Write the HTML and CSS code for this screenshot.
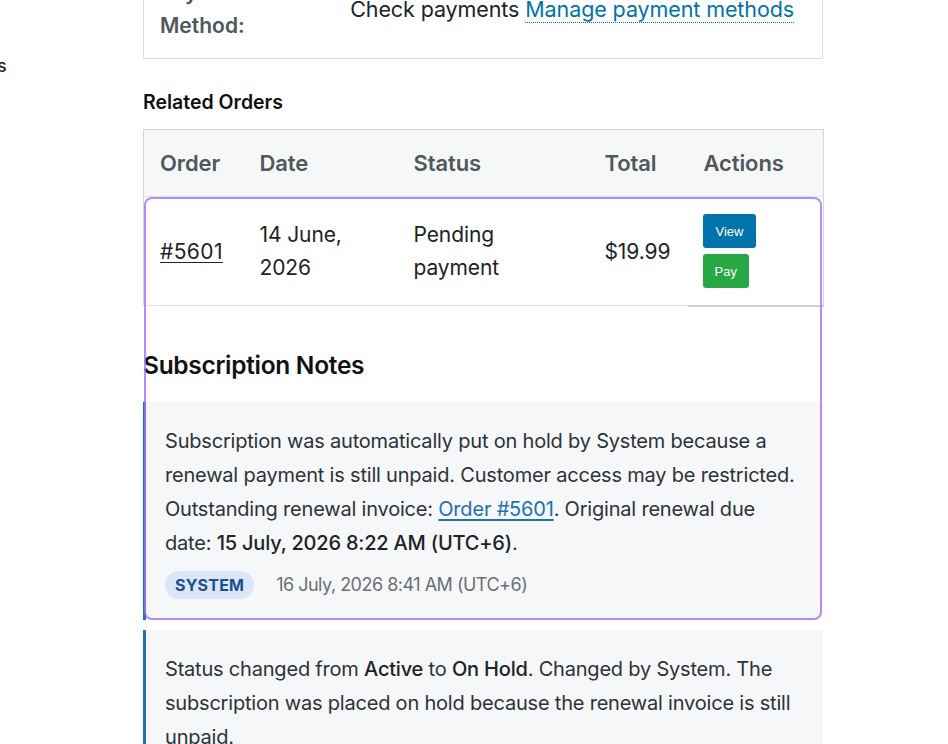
FILE: index.html
```html
<!DOCTYPE html>
<html lang="en">
<head>
<meta charset="utf-8">
<title>Subscription</title>
<link rel="stylesheet" href="styles.css">
</head>
<body>
<div class="page">
  <aside class="sidebar">
    <p class="side-item">Subscriptions</p>
  </aside>
  <main class="main">
    <div class="pay-box">
      <div class="pay-label">Payment<br>Method:</div>
      <div class="pay-value">Check payments <a class="pay-link" href="#">Manage payment methods</a></div>
    </div>

    <h3 class="section-title">Related Orders</h3>
    <table class="orders">
      <colgroup>
        <col class="c-order"><col class="c-date"><col class="c-status"><col class="c-total"><col class="c-actions">
      </colgroup>
      <thead>
        <tr><th>Order</th><th>Date</th><th>Status</th><th>Total</th><th>Actions</th></tr>
      </thead>
      <tbody>
        <tr>
          <td><a class="order-link" href="#">#5601</a></td>
          <td>14 June,<br>2026</td>
          <td>Pending<br>payment</td>
          <td>$19.99</td>
          <td class="actions">
            <a class="btn btn-view" href="#">View</a>
            <a class="btn btn-pay" href="#">Pay</a>
          </td>
        </tr>
      </tbody>
    </table>

    <h2 class="notes-title">Subscription Notes</h2>
    <div class="note">
      <p class="note-text">Subscription was automatically put on hold by System because a renewal payment is still unpaid. Customer access may be restricted. Outstanding renewal invoice: <a class="note-link" href="#">Order #5601</a>. Original renewal due date: <strong>15 July, 2026 8:22 AM (UTC+6)</strong>.</p>
      <div class="note-meta">
        <span class="badge">SYSTEM</span>
        <span class="note-date">16 July, 2026 8:41 AM (UTC+6)</span>
      </div>
    </div>
    <div class="note">
      <p class="note-text">Status changed from <strong>Active</strong> to <strong>On Hold</strong>. Changed by System. The subscription was placed on hold because the renewal invoice is still unpaid.</p>
    </div>

    <div class="highlight"></div>
  </main>
</div>
</body>
</html>
```
FILE: styles.css
```css
html, body {
  margin: 0;
  padding: 0;
  background: #ffffff;
}
body {
  font-family: "Inter", "Noto Sans", sans-serif;
  color: #1d2327;
  overflow: hidden;
}
.page {
  display: flex;
  align-items: flex-start;
}
.sidebar {
  width: 143px;
  flex: 0 0 143px;
  overflow: hidden;
}
.side-item {
  margin: 55px 0 0 -112px;
  font-size: 18px;
  font-weight: 500;
  color: #1d2327;
  white-space: nowrap;
}
.main {
  position: relative;
  width: 680px;
  flex: 0 0 680px;
}
.pay-box {
  margin-top: -41px;
  border: 1px solid #dcdcde;
  display: flex;
  align-items: center;
  justify-content: space-between;
  padding: 16px 28px 16px 16px;
}
.pay-label {
  font-size: 21px;
  font-weight: 600;
  line-height: 33px;
  color: #50575e;
  letter-spacing: 0;
}
.pay-value {
  font-size: 21.5px;
  line-height: 33px;
  color: #1d2327;
  letter-spacing: -0.1px;
}
.pay-link {
  color: #0073aa;
  text-decoration: none;
  border-bottom: 1px dotted #0073aa;
}
.section-title {
  margin: 31px 0 15px 0;
  font-size: 19.5px;
  font-weight: 600;
  line-height: 24px;
  color: #111;
  letter-spacing: 0;
}
.orders {
  width: 680px;
  border-collapse: collapse;
  table-layout: fixed;
  border: 1px solid #d5d5d7;
  border-bottom: none;
  font-size: 21px;
  letter-spacing: -0.1px;
}
.c-order { width: 100px; }
.c-date { width: 154px; }
.c-status { width: 191px; }
.c-total { width: 99px; }
.c-actions { width: 136px; }
.orders th {
  background: #f6f7f7;
  text-align: left;
  font-weight: 600;
  font-size: 22px;
  color: #50575e;
  height: 66px;
  padding: 0 16px;
  border-bottom: 1px solid #e2e2e4;
}
.orders td {
  padding: 21px 16px 21px 16px;
  line-height: 33px;
  vertical-align: middle;
  border-bottom: 1px solid #e2e2e4;
}
.orders td.actions {
  padding: 17px 15px 16px 15px;
  border-bottom: 2px solid #cfcfd1;
}
.order-link {
  color: #1d2327;
  text-decoration: underline;
  text-underline-offset: 3px;
  text-decoration-thickness: 1px;
  letter-spacing: 0.4px;
}
.btn {
  display: flex;
  align-items: center;
  justify-content: center;
  height: 34px;
  padding: 0 13px;
  width: fit-content;
  border-radius: 3px;
  color: #ffffff;
  text-decoration: none;
  font-family: "Liberation Sans", Arial, sans-serif;
  font-size: 13px;
  letter-spacing: 0;
  line-height: 1;
}
.btn-view {
  background: #0073aa;
  margin-bottom: 6px;
}
.btn-pay {
  background: #28a745;
  padding: 0 12px;
}
.notes-title {
  margin: 42px 0 21px 0;
  font-size: 24.5px;
  font-weight: 600;
  line-height: 32px;
  color: #111;
  letter-spacing: -0.3px;
}
.note {
  background: #f6f7f9;
  border-left: 3px solid #2271b1;
  padding: 22px 22px 21px 19px;
  margin-bottom: 10px;
}
.note-text {
  margin: 0;
  font-size: 20px;
  line-height: 34px;
  color: #2c3338;
  letter-spacing: -0.2px;
}
.note-text strong {
  font-weight: 500;
  color: #1d2327;
}
.note-link {
  color: #2271b1;
  text-decoration: underline;
  text-underline-offset: 3px;
}
.note-meta {
  display: flex;
  align-items: center;
  gap: 22px;
  margin-top: 11px;
}
.badge {
  display: inline-flex;
  align-items: center;
  height: 28px;
  padding: 0 10px;
  border-radius: 14px;
  background: #dbe7f8;
  color: #1e4f8f;
  font-size: 16px;
  font-weight: 700;
  letter-spacing: 0.2px;
}
.note-date {
  font-size: 18px;
  color: #6b6f75;
  letter-spacing: -0.5px;
}
.highlight {
  position: absolute;
  top: 197px;
  left: 1px;
  width: 674px;
  height: 419px;
  border: 2px solid rgba(165, 110, 245, 0.8);
  border-radius: 8px;
  pointer-events: none;
}
```
